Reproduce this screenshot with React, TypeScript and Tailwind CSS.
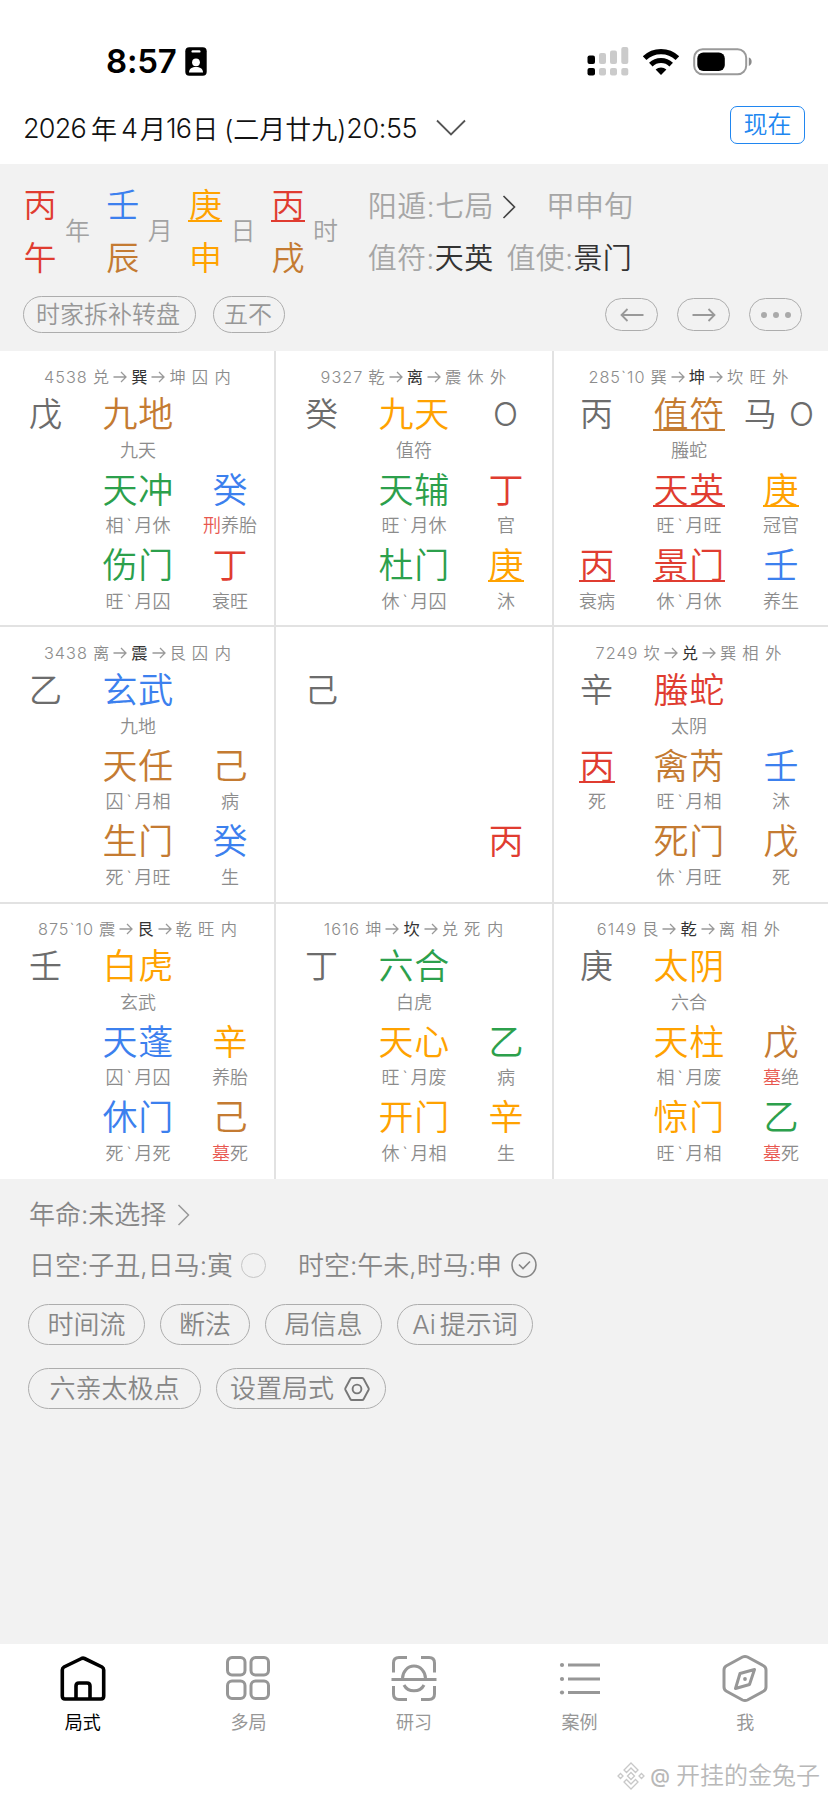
import React from 'react';
import clsx from 'clsx';

type Tone = 'red' | 'blue' | 'gold' | 'brown' | 'green' | 'gray';

const tones: Record<Tone, string> = {
  red: 'text-[#e03c30]',
  blue: 'text-[#3c80ee]',
  gold: 'text-[#ffa200]',
  brown: 'text-[#c47b32]',
  green: 'text-[#2ca04c]',
  gray: 'text-[#6c6c6c]',
};

// [text, tone, underlined]
type Glyph = [string, Tone, boolean?];

interface Item {
  main: Glyph;
  sub?: string;
  warn?: string;
}

interface Palace {
  num?: string;
  from?: string;
  at?: string;
  to?: string;
  state?: string;
  // three rows of left / centre / right
  rows: (Item | null)[][];
}

const item = (text: string, tone: Tone, sub?: string, underline?: boolean, warn?: string): Item => ({
  main: [text, tone, underline],
  sub,
  warn,
});

const palaces: Palace[] = [
  {
    num: '4538', from: '兑', at: '巽', to: '坤', state: '囚 内',
    rows: [
      [item('戊', 'gray'), item('九地', 'brown', '九天'), null],
      [null, item('天冲', 'green', '相`月休'), item('癸', 'blue', '养胎', false, '刑')],
      [null, item('伤门', 'green', '旺`月囚'), item('丁', 'red', '衰旺')],
    ],
  },
  {
    num: '9327', from: '乾', at: '离', to: '震', state: '休 外',
    rows: [
      [item('癸', 'gray'), item('九天', 'gold', '值符'), item('O', 'gray')],
      [null, item('天辅', 'green', '旺`月休'), item('丁', 'red', '官')],
      [null, item('杜门', 'green', '休`月囚'), item('庚', 'gold', '沐', true)],
    ],
  },
  {
    num: '285`10', from: '巽', at: '坤', to: '坎', state: '旺 外',
    rows: [
      [item('丙', 'gray'), item('值符', 'brown', '螣蛇', true), item('马 O', 'gray')],
      [null, item('天英', 'red', '旺`月旺', true), item('庚', 'gold', '冠官', true)],
      [item('丙', 'red', '衰病', true), item('景门', 'red', '休`月休', true), item('壬', 'blue', '养生')],
    ],
  },
  {
    num: '3438', from: '离', at: '震', to: '艮', state: '囚 内',
    rows: [
      [item('乙', 'gray'), item('玄武', 'blue', '九地'), null],
      [null, item('天任', 'brown', '囚`月相'), item('己', 'brown', '病')],
      [null, item('生门', 'brown', '死`月旺'), item('癸', 'blue', '生')],
    ],
  },
  {
    rows: [
      [item('己', 'gray'), null, null],
      [null, null, null],
      [null, null, item('丙', 'red')],
    ],
  },
  {
    num: '7249', from: '坎', at: '兑', to: '巽', state: '相 外',
    rows: [
      [item('辛', 'gray'), item('螣蛇', 'red', '太阴'), null],
      [item('丙', 'red', '死', true), item('禽芮', 'brown', '旺`月相'), item('壬', 'blue', '沐')],
      [null, item('死门', 'brown', '休`月旺'), item('戊', 'brown', '死')],
    ],
  },
  {
    num: '875`10', from: '震', at: '艮', to: '乾', state: '旺 内',
    rows: [
      [item('壬', 'gray'), item('白虎', 'gold', '玄武'), null],
      [null, item('天蓬', 'blue', '囚`月囚'), item('辛', 'gold', '养胎')],
      [null, item('休门', 'blue', '死`月死'), item('己', 'brown', '死', false, '墓')],
    ],
  },
  {
    num: '1616', from: '坤', at: '坎', to: '兑', state: '死 内',
    rows: [
      [item('丁', 'gray'), item('六合', 'green', '白虎'), null],
      [null, item('天心', 'gold', '旺`月废'), item('乙', 'green', '病')],
      [null, item('开门', 'gold', '休`月相'), item('辛', 'gold', '生')],
    ],
  },
  {
    num: '6149', from: '艮', at: '乾', to: '离', state: '相 外',
    rows: [
      [item('庚', 'gray'), item('太阴', 'gold', '六合'), null],
      [null, item('天柱', 'gold', '相`月废'), item('戊', 'brown', '绝', false, '墓')],
      [null, item('惊门', 'gold', '旺`月相'), item('乙', 'green', '死', false, '墓')],
    ],
  },
];

const pillars: { stem: Glyph; branch: Glyph; label: string }[] = [
  { stem: ['丙', 'red'], branch: ['午', 'red'], label: '年' },
  { stem: ['壬', 'blue'], branch: ['辰', 'brown'], label: '月' },
  { stem: ['庚', 'gold', true], branch: ['申', 'gold'], label: '日' },
  { stem: ['丙', 'red', true], branch: ['戌', 'brown'], label: '时' },
];

const StatusBar = () => (
  <div className="flex h-[88px] items-end justify-between pr-[75px] pb-[12px] pl-[106px]">
    <div className="flex items-center gap-[8px]">
      <span className="h-[30px] text-[33px] leading-[30px] font-semibold tracking-[-0.2px] text-black">8:57</span>
      <svg width="22" height="29" viewBox="0 0 22 29">
        <rect x="0.3" y="0.3" width="21.4" height="28.4" rx="4" fill="#000" />
        <rect x="6.5" y="3.2" width="9" height="2.4" rx="1.2" fill="#fff" />
        <circle cx="11" cy="15.3" r="3.9" fill="#fff" />
        <path d="M4 25.5c0-4 3.2-5.6 7-5.6s7 1.6 7 5.6z" fill="#fff" />
      </svg>
    </div>
    <div className="flex items-center">
      <svg width="42" height="29" viewBox="0 0 42 29">
        <g fill="#000">
          <rect x="0.5" y="8.5" width="7.5" height="8.5" rx="2" />
          <rect x="0.5" y="21" width="7.5" height="7.5" rx="2" />
        </g>
        <g fill="#cbcbcb">
          <rect x="12" y="6" width="7" height="11" rx="2" />
          <rect x="12" y="21" width="7" height="7.5" rx="2" />
          <rect x="23" y="3.5" width="7" height="13.5" rx="2" />
          <rect x="23" y="21" width="7" height="7.5" rx="2" />
          <rect x="34.3" y="0" width="7" height="17" rx="2" />
          <rect x="34.3" y="21" width="7" height="7.5" rx="2" />
        </g>
      </svg>
      <svg width="38" height="28" viewBox="0 0 38 28" className="ml-[13px]">
        <path d="M2.6 10.2a23.6 23.6 0 0 1 32.8 0" fill="none" stroke="#000" strokeWidth="5.2" />
        <path d="M8.8 16.6a14.6 14.6 0 0 1 20.4 0" fill="none" stroke="#000" strokeWidth="5" />
        <path d="M19 27l-5.4-5.4a8 8 0 0 1 10.8 0z" fill="#000" />
      </svg>
      <svg width="60" height="28" viewBox="0 0 60 28" className="ml-[13px]">
        <rect x="1.2" y="1.2" width="52" height="25" rx="8.5" fill="none" stroke="#9a9a9a" strokeWidth="2" />
        <rect x="4.3" y="4.5" width="27.5" height="18.5" rx="6" fill="#000" />
        <path d="M55.8 9.6c3.8 1 3.8 7.4 0 8.4z" fill="#8a8a8a" />
      </svg>
    </div>
  </div>
);

const DateBar = () => (
  <div className="flex h-[76px] items-start justify-between pr-[23px] pl-[23px]">
    <div className="flex h-[80px] items-center text-[26px] text-[#111]">
      <div className="flex h-[80px] items-center pt-[2px] whitespace-nowrap">
        <span className="text-[27px] tracking-[-0.8px]">2026</span>
        <span className="ml-[5px]">年</span>
        <span className="ml-[4px] text-[27px]">4</span>
        <span className="ml-[2px]">月</span>
        <span className="text-[27px] tracking-[-0.8px]">16</span>
        <span className="ml-[1px]">日</span>
        <span className="ml-[6px]">(二月廿九)</span>
        <span className="text-[27px] tracking-[-0.4px]">20:55</span>
      </div>
      <svg width="30" height="18" viewBox="0 0 30 18" className="ml-[19px]">
        <path d="M1 1.5l14 14 14-14" fill="none" stroke="#555" strokeWidth="1.8" />
      </svg>
    </div>
    <button className="mt-[18px] flex h-[38px] w-[75px] items-center justify-center rounded-[7px] border border-[#2086f0] text-[24px] text-[#2086f0]">
      现在
    </button>
  </div>
);

const Pillars = () => (
  <div className="flex">
    {pillars.map((p, i) => (
      <div key={i} className="flex w-[82.7px] items-center">
        <div className="flex w-[34px] flex-col items-center text-[33px]">
          {[p.stem, p.branch].map(([text, tone, line], j) => (
            <span key={j} className={clsx('flex h-[52.5px] items-center', tones[tone])}>
              <span className={clsx('h-[34px] w-[34px] border-b-2 text-center leading-[34px]', line ? 'border-current' : 'border-transparent')}>
                {text}
              </span>
            </span>
          ))}
        </div>
        <span className="ml-[8px] pt-[1px] text-[25px] text-[#a2a2a2]">{p.label}</span>
      </div>
    ))}
  </div>
);

const Pill = ({ className, children }: { className?: string; children: React.ReactNode }) => (
  <button className={clsx('flex items-center justify-center rounded-full border border-[#adadad] whitespace-nowrap', className)}>
    {children}
  </button>
);

const Summary = () => (
  <section className="h-[187px] bg-[#f2f2f2] pt-[15px] pr-[26px] pl-[23px]">
    <div className="flex">
      <Pillars />
      <div className="ml-[14px] text-[29px] text-[#a6a6a6]">
        <div className="flex h-[52.5px] items-center pt-[3px] whitespace-nowrap">
          <span className="tracking-[0.4px]">阳遁:七局</span>
          <svg width="14" height="24" viewBox="0 0 14 24" className="ml-[8px]">
            <path d="M1.5 1l11 11-11 11" fill="none" stroke="#444" strokeWidth="1.6" />
          </svg>
          <span className="ml-[30px]">甲申旬</span>
        </div>
        <div className="flex h-[52.5px] items-center pt-[2px] tracking-[0.3px] whitespace-nowrap">
          <span>值符:</span>
          <span className="text-[#333]">天英</span>
          <span className="ml-[13px]">值使:</span>
          <span className="text-[#333]">景门</span>
        </div>
      </div>
    </div>
    <div className="mt-[12px] flex h-[37px] items-center">
      <Pill className="h-[37px] w-[173px] pr-[3px] text-[24px] text-[#979797]">时家拆补转盘</Pill>
      <Pill className="ml-[17px] h-[37px] w-[72px] pr-[2px] text-[24px] text-[#979797]">五不</Pill>
      <div className="ml-auto flex gap-[19px]">
        <Pill className="h-[33px] w-[53px]">
          <svg width="24" height="14" viewBox="0 0 24 14" fill="none" stroke="#999" strokeWidth="1.8">
            <path d="M23.5 7H1.5M7.5 1L1.5 7l6 6" />
          </svg>
        </Pill>
        <Pill className="h-[33px] w-[53px]">
          <svg width="24" height="14" viewBox="0 0 24 14" fill="none" stroke="#999" strokeWidth="1.8">
            <path d="M0.5 7h22M16.5 1l6 6-6 6" />
          </svg>
        </Pill>
        <Pill className="h-[33px] w-[53px] gap-[6px]">
          <i className="size-[6px] rounded-full bg-[#aaa]" />
          <i className="size-[6px] rounded-full bg-[#aaa]" />
          <i className="size-[6px] rounded-full bg-[#aaa]" />
        </Pill>
      </div>
    </div>
  </section>
);

const Arrow = () => (
  <svg width="14" height="12" viewBox="0 0 14 12" className="mr-[4px] ml-[3px]" fill="none" stroke="#999" strokeWidth="1.3">
    <path d="M0.5 6h12M8 1l5 5-5 5" />
  </svg>
);

const CellItem = ({ data }: { data: Item | null }) => {
  if (!data) return <div />;
  const [text, tone, line] = data.main;
  const stem = tone === 'gray';
  return (
    <div className="flex flex-col items-center whitespace-nowrap">
      <div className={clsx('flex h-[42px] items-center', tones[tone])}>
        <span
          className={clsx(
            'h-[36px] border-b-2 leading-[38px]',
            line ? 'border-current' : 'border-transparent',
            stem ? 'pr-[1px] text-[33px]' : 'pl-[0.5px] text-[35px] tracking-[0.7px]',
            text === 'O' && 'leading-[35px]',
            text === '马 O' && 'pr-[4px] [word-spacing:3px]'
          )}
        >
          {text}
        </span>
      </div>
      <div className="flex h-[32px] items-center text-[18px] text-[#8c8c8c]">
        {data.warn && <span className="text-[#e8574f]">{data.warn}</span>}
        <span>
          {data.sub?.split('`').map((part, i) => (
            <React.Fragment key={i}>
              {i > 0 && <span className="inline-block w-[11px] text-center">`</span>}
              {part}
            </React.Fragment>
          ))}
        </span>
      </div>
    </div>
  );
};

const PalaceCell = ({ data, index }: { data: Palace; index: number }) => (
  <div
    className={clsx(
      'border-[#e2e2e2] bg-white',
      index % 3 < 2 && 'border-r-2',
      index < 6 && 'border-b-2'
    )}
  >
    <div className={clsx('w-[276px]', index % 3 === 2 && '-ml-[3px]', index >= 6 && '-mt-[1px]')}>
      <div className="flex h-[41px] items-center justify-center pt-[11px] text-[16.3px] tracking-[1px] whitespace-nowrap text-[#8c8c8c]">
        {data.num && (
          <>
            <span className="mr-[5px]">{data.num}</span>
            <span>{data.from}</span>
            <Arrow />
            <span className="font-normal text-[#333]">{data.at}</span>
            <Arrow />
            <span>{data.to}</span>
            <span className="ml-[5px]">{data.state}</span>
          </>
        )}
      </div>
      {data.rows.map((row, i) => (
        <div key={i} className="grid h-[75.5px] grid-cols-3">
          {row.map((cell, j) => (
            <CellItem key={j} data={cell} />
          ))}
        </div>
      ))}
    </div>
  </div>
);

const Options = () => (
  <section className="flex-1 bg-[#f2f2f2] pl-[28px] text-[26px] text-[#868686]">
    <div className="flex h-[51px] items-center pt-[20px] pl-[1px]">
      <span>年命:未选择</span>
      <svg width="14" height="22" viewBox="0 0 14 22" className="ml-[11px]">
        <path d="M1.5 1l10 10-10 10" fill="none" stroke="#999" strokeWidth="1.5" />
      </svg>
    </div>
    <div className="flex h-[70px] items-center pl-[1px]">
      <span>日空:子丑,日马:寅</span>
      <i className="ml-[8px] size-[25px] rounded-full border-[1.5px] border-[#c6c6c6]" />
      <span className="ml-[32px]">时空:午未,时马:申</span>
      <svg width="26" height="26" viewBox="0 0 26 26" className="ml-[9px]" fill="none" stroke="#868686" strokeWidth="1.6">
        <circle cx="13" cy="13" r="12" />
        <path d="M8 12.5l4 4 7-7" />
      </svg>
    </div>
    <div className="mt-[4px] flex gap-[15px]">
      <Pill className="h-[41px] w-[117px]">时间流</Pill>
      <Pill className="h-[41px] w-[90px]">断法</Pill>
      <Pill className="h-[41px] w-[117px]">局信息</Pill>
      <Pill className="h-[41px] w-[136px]">
        Ai<span className="ml-[4px]">提示词</span>
      </Pill>
    </div>
    <div className="mt-[23px] flex gap-[15px]">
      <Pill className="h-[41px] w-[173px]">六亲太极点</Pill>
      <Pill className="h-[41px] w-[170px] pr-[2px]">
        设置局式
        <svg width="26" height="24" viewBox="0 0 26 24" className="ml-[10px]" fill="none" stroke="#777" strokeWidth="1.9" strokeLinejoin="round">
          <path d="M7.8 1h10.4q1 0 1.5 1l4.8 9q.5 1 0 2l-4.8 9q-.5 1-1.5 1H7.8q-1 0-1.5-1l-4.8-9q-.5-1 0-2l4.8-9q.5-1 1.5-1z" />
          <circle cx="13" cy="12" r="4.4" />
        </svg>
      </Pill>
    </div>
  </section>
);

const navIcons = {
  home: (
    <path
      strokeWidth="3.6"
      d="M22.5 5.5Q24 4.8 25.5 5.5L43 14Q44.7 15 44.7 17V43Q44.7 46 42 46H6Q3.3 46 3.3 43V17Q3.3 15 5 14ZM17 46V33Q17 30 20 30H28Q31 30 31 33V46"
    />
  ),
  grid: (
    <>
      <rect x="3.5" y="4.5" width="17.5" height="17.5" rx="4.5" />
      <rect x="27" y="4.5" width="17.5" height="17.5" rx="4.5" />
      <rect x="3.5" y="28" width="17.5" height="17.5" rx="4.5" />
      <rect x="27" y="28" width="17.5" height="17.5" rx="4.5" />
    </>
  ),
  scan: (
    <>
      <path d="M3.5 19.5V10Q3.5 4.5 9 4.5H17M31 4.5H39Q44.5 4.5 44.5 10V19.5M3.5 33V41Q3.5 46.5 9 46.5H17M31 46.5H39Q44.5 46.5 44.5 41V33" />
      <path d="M1.5 26.5H46.5M12.5 25.5A11.5 12.5 0 0 1 35.5 25.5M14 32A11 10 0 0 0 34 32" />
    </>
  ),
  list: (
    <>
      <path d="M12 12H44M12 26H44M12 39.5H44" />
      <g fill="currentColor" stroke="none">
        <circle cx="6" cy="12" r="2.1" />
        <circle cx="6" cy="26" r="2.1" />
        <circle cx="6" cy="39.5" r="2.1" />
      </g>
    </>
  ),
  me: (
    <>
      <path d="M21.5 4Q24 2.8 26.5 4L42.5 12.8Q45 14.2 45 17V34Q45 36.8 42.5 38.2L26.5 47Q24 48.2 21.5 47L5.5 38.2Q3 36.800 3 34V17Q3 14.200 5.500 12.800Z" />
      <path d="M33.5 16.5L28.5 31.5L14.5 35.5L19 20.5Z" strokeLinejoin="round" />
      <circle cx="24" cy="26" r="1.9" fill="currentColor" stroke="none" />
    </>
  ),
};

const tabs: { label: string; icon: keyof typeof navIcons }[] = [
  { label: '局式', icon: 'home' },
  { label: '多局', icon: 'grid' },
  { label: '研习', icon: 'scan' },
  { label: '案例', icon: 'list' },
  { label: '我', icon: 'me' },
];

const TabBar = () => (
  <nav className="grid h-[156px] grid-cols-5 bg-white">
    {tabs.map((tab, i) => (
      <div key={tab.icon} className={clsx('flex flex-col items-center pt-[9px]', i === 0 ? 'text-black' : 'text-[#979797]')}>
        <svg width="48" height="50" viewBox="0 0 48 50" fill="none" stroke="currentColor" strokeWidth="3">
          {navIcons[tab.icon]}
        </svg>
        <span className="mt-[8px] text-[18px] leading-[24px] font-normal">{tab.label}</span>
      </div>
    ))}
  </nav>
);

const Watermark = () => (
  <div className="absolute right-[8px] bottom-[9px] flex items-center text-[#b8b8b8]">
    <svg width="28" height="28" viewBox="0 0 28 28" fill="none" stroke="#c8c8c8" strokeWidth="1.3">
      <path d="M14 1l7 7-2.5 2.5L14 6 9.5 10.5 7 8z" />
      <path d="M14 27l-7-7 2.5-2.500L14 22l4.500-4.500L21 20z" />
      <path d="M14 10.500l3.500 3.500-3.500 3.500-3.500-3.500z" />
      <path d="M3.500 11.500L6 14l-2.500 2.500L1 14zM24.500 11.500L27 14l-2.500 2.500L22 14z" />
    </svg>
    <span className="ml-[5px] text-[20px] font-medium">@</span>
    <span className="ml-[6px] text-[24px] leading-[30px]">开挂的金兔子</span>
  </div>
);

export default function App() {
  return (
    <div className="relative flex h-[1800px] w-[828px] flex-col overflow-hidden bg-white font-['Inter','Noto_Sans_CJK_SC',sans-serif] font-[350]">
      <StatusBar />
      <DateBar />
      <Summary />
      <main className="grid h-[828px] grid-cols-[276px_278px_274px] grid-rows-[276px_277px_275px]">
        {palaces.map((p, i) => (
          <PalaceCell key={i} data={p} index={i} />
        ))}
      </main>
      <Options />
      <TabBar />
      <Watermark />
    </div>
  );
}
